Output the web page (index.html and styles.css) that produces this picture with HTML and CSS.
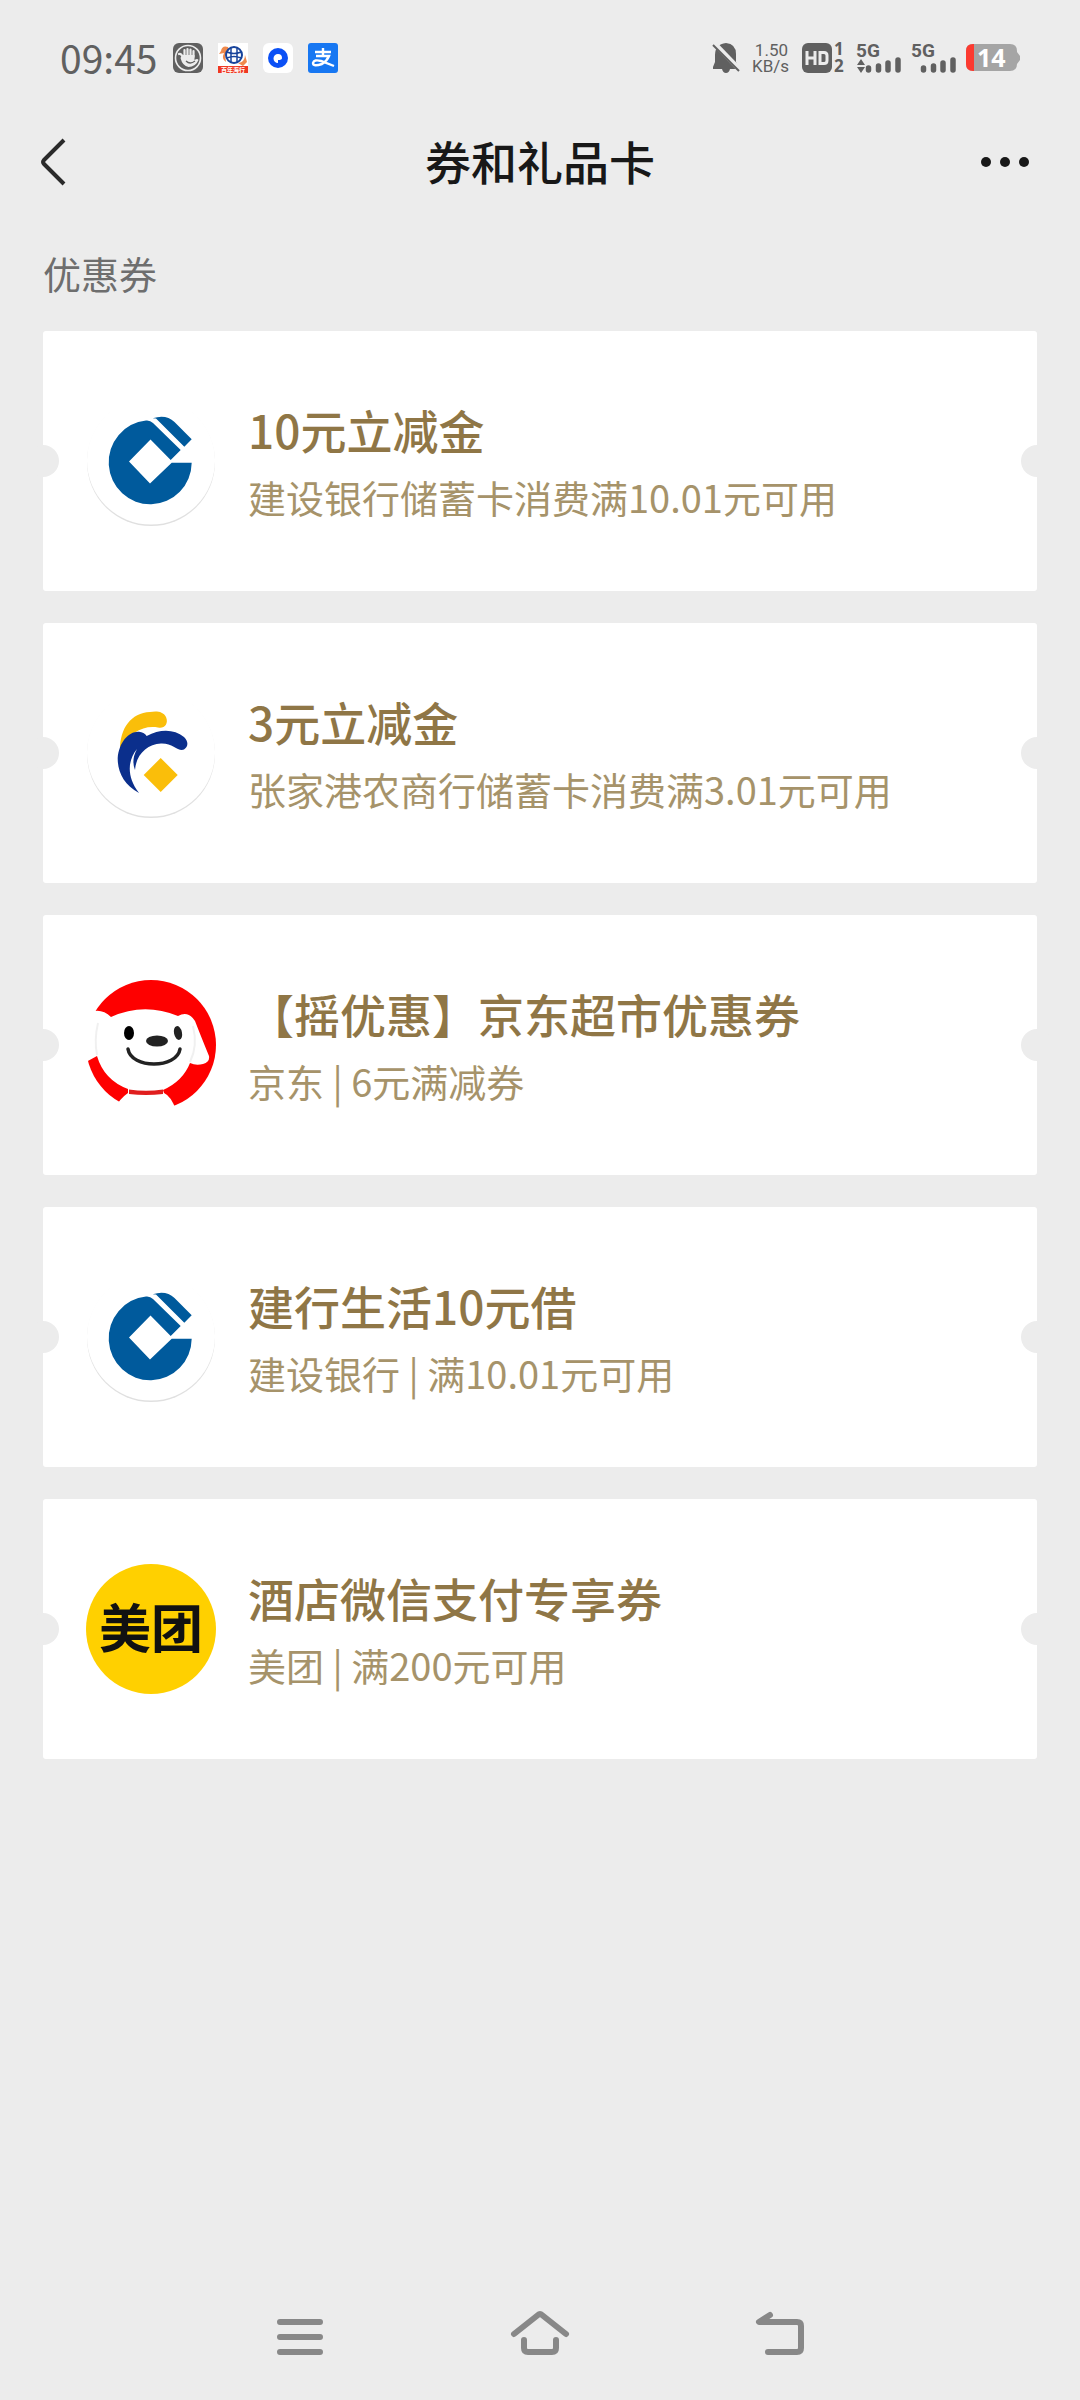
FILE: index.html
```html
<!DOCTYPE html>
<html lang="zh-CN">
<head>
    <meta charset="UTF-8">
    <meta name="viewport" content="width=device-width, initial-scale=1.0">
    <title>券和礼品卡</title>
    <link rel="stylesheet" href="styles.css">
</head>
<body>
    <!-- Shared logo, used by two coupons -->
    <svg class="defs" width="0" height="0" aria-hidden="true">
        <symbol id="ccb" viewBox="0 0 130 130">
            <circle cx="65" cy="66" r="64" fill="#e0e0e0"/>
            <circle cx="65" cy="64.5" r="64" fill="#fff"/>
            <path fill="#005a9c" d="M60 24.5Q64 24 67 27L94.7 54L84.7 64L64.5 43.5L43 65.5L64 87.5L85.7 66.7H105.7A41.5 42 0 1 1 60 24.5Z"/>
            <path fill="#005a9c" d="M66.7 22.3Q80 18 88.5 26L105.7 43.3L98.3 50.7L70 22.5Z"/>
        </symbol>
    </svg>

    <div class="status-bar">
        <span class="time">09:45</span>
        <div class="status-apps">
            <svg width="30" height="30" viewBox="0 0 30 30">
                <rect width="30" height="30" rx="6" fill="#606060"/>
                <circle cx="15" cy="15" r="12.5" fill="none" stroke="#ececec" stroke-width="1.6"/>
                <path d="M6 11Q8 10 10 14M11.500 14V7M14.500 13V6M17.500 13V6.500M20.500 14V8" fill="none" stroke="#ececec" stroke-width="2.2" stroke-linecap="round"/>
                <path d="M9 12h12.500v5q3-2 4 0-3 7-10 7-6-1-8-9Z" fill="#ececec"/>
                <path d="M13 18q4 4 9 0" fill="none" stroke="#606060" stroke-width="1.2"/>
            </svg>
            <svg width="30" height="30" viewBox="0 0 30 30">
                <rect width="30" height="30" fill="#fff"/>
                <path d="M10 4Q4 2 3 8l-2 3 5-1q-3 6 2 9l-1-7 4-5ZM20 20q7-1 7-8l2 7-4 4Z" fill="#ef8a4d"/>
                <circle cx="16" cy="12" r="8" fill="none" stroke="#17439b" stroke-width="2"/>
                <path d="M13 5v14M19 5v14M9 9q7 3 14 0M9 15q7-3 14 0" fill="none" stroke="#17439b" stroke-width="1.5"/>
                <rect y="23" width="30" height="7" fill="#f03822"/>
                <text x="15" y="29" class="tiny-label">百年海行</text>
            </svg>
            <svg width="30" height="30" viewBox="0 0 30 30">
                <rect width="30" height="30" rx="6" fill="#fff"/>
                <circle cx="15" cy="15" r="10" fill="#0b50f5"/>
                <path d="M15 11a4 4 0 1 0 0 9v-3q4 0 4-2a4 4 0 0 0-4-4Z" fill="#fff"/>
            </svg>
            <svg width="30" height="30" viewBox="0 0 30 30">
                <rect width="30" height="30" rx="3" fill="#1777f2"/>
                <path d="M7 9h16M15 5v8M8 13h13q-2 5-7 8-9 3-9-1 1-4 8-2l13 5" fill="none" stroke="#fff" stroke-width="2.4"/>
            </svg>
        </div>

        <div class="status-icons">
            <svg width="28" height="30" viewBox="0 0 28 30">
                <path d="M14 0Q3 1 3 12v7l-2 5v2h9q1 4 4 4t4-4h8v-3l-2-4v-8Q24 1 14 0Z" fill="#606060"/>
                <path d="M2 0L28 27" stroke="#ececec" stroke-width="5"/>
                <path d="M1 2L27 28" stroke="#606060" stroke-width="2"/>
            </svg>
            <div class="speed"><span>1.50</span><span>KB/s</span></div>
            <svg class="hd" width="44" height="30" viewBox="0 0 44 30">
                <rect width="30" height="30" rx="6" fill="#606060"/>
                <path d="M5 8v14M13 8v14M5 15h8M18 9.5h4q3 0 3 3v5q0 3-3 3h-4Z" fill="none" stroke="#ececec" stroke-width="3"/>
                <text x="32" y="12" class="sim">1</text>
                <text x="32" y="29" class="sim">2</text>
            </svg>
            <svg class="signal" width="45" height="30" viewBox="0 0 45 30">
                <text x="0" y="14" class="net">5G</text>
                <path d="M1 22l4-6 4 6ZM1 24l4 6 4-6Z" fill="#606060"/>
                <path d="M12.500 25v2M22.500 23v4M32 20v7M42 17v10" stroke="#606060" stroke-width="5.500" stroke-linecap="round"/>
            </svg>
            <svg class="signal" width="45" height="30" viewBox="0 0 45 30">
                <text x="0" y="14" class="net">5G</text>
                <path d="M12.500 25v2M22.500 23v4M32 20v7M42 17v10" stroke="#606060" stroke-width="5.500" stroke-linecap="round"/>
            </svg>
            <svg width="54" height="28" viewBox="0 0 54 28">
                <path d="M7 0h37q7 0 7 7v1l3 4v4l-3 4q0 7-7 7H7Q0 27 0 20V7Q0 0 7 0Z" fill="#a5a5a5"/>
                <path d="M8 0H7Q0 0 0 7v13q0 7 7 7h1Z" fill="#fc3a30"/>
                <text x="11" y="23" class="battery-level">14</text>
            </svg>
        </div>
    </div>

    <header class="header">
        <button class="icon-btn" type="button" aria-label="返回">
            <svg width="26" height="48" viewBox="0 0 26 48">
                <path d="M24 2L4 22q-2 2 0 4l20 20" fill="none" stroke="#2a2a2a" stroke-width="4"/>
            </svg>
        </button>
        <h1>券和礼品卡</h1>
        <button class="icon-btn" type="button" aria-label="更多">
            <svg width="50" height="12" viewBox="0 0 50 12">
                <g fill="#181818">
                    <circle cx="6" cy="6" r="5"/>
                    <circle cx="25" cy="6" r="5"/>
                    <circle cx="44" cy="6" r="5"/>
                </g>
            </svg>
        </button>
    </header>

    <main class="content">
        <h2>优惠券</h2>
        <ul class="coupons">
            <li class="coupon">
                <svg class="logo" viewBox="0 0 130 130"><use href="#ccb"/></svg>
                <div class="info">
                    <h3>10元立减金</h3>
                    <p>建设银行储蓄卡消费满10.01元可用</p>
                </div>
            </li>
            <li class="coupon">
                <svg class="logo" viewBox="0 0 130 130">
                    <circle cx="65" cy="66" r="64" fill="#e0e0e0"/>
                    <circle cx="65" cy="64.5" r="64" fill="#fff"/>
                    <path d="M34 62C34 40 45 25 64 24C70 23 77 23 80 29C83 36 78 41 72 39.500C58 37 43 44 34 62Z" fill="#fabe0a"/>
                    <path d="M53 105C38 97 31.500 84 31.700 70C33 54 43 43 53 43.700Q58 44 60.700 48C74 41 88 41 98 49C103 54 102 59 98 61.500C92 64 87 55 75 55.500C61 56 50 67 49 82Q45 72 51 61C42 72 40 88 53 105Z" fill="#0b2f8c"/>
                    <path d="M74.700 70L91.700 87L74.700 104L57.700 87Z" fill="#fabe0a"/>
                </svg>
                <div class="info">
                    <h3>3元立减金</h3>
                    <p>张家港农商行储蓄卡消费满3.01元可用</p>
                </div>
            </li>
            <li class="coupon">
                <svg class="logo" viewBox="0 0 130 130">
                    <circle cx="65" cy="65" r="65" fill="#fe0000"/>
                    <path d="M0 34Q14 26 25 37Q58 22 92 36Q102 30 109 41Q114 54 123 76Q124 82 117 84Q110 86 104 83Q97 101 77 110L78 113Q85 116 90 130H28Q33 119 42 113V109Q18 100 11 76L0 82Z" fill="#fff"/>
                    <path d="M107 46Q112 66 104 82M12 43Q8 60 11 75" fill="none" stroke="#f0f0f0" stroke-width="2"/>
                    <path d="M43 109.500Q60 112 77 109.500V114Q60 116 43 114Z" fill="#e01e1e"/>
                    <ellipse cx="43" cy="53" rx="5" ry="7" fill="#000"/>
                    <ellipse cx="92" cy="53" rx="4" ry="7" fill="#222" transform="rotate(-12 92 53)"/>
                    <ellipse cx="71" cy="61" rx="11" ry="5.500" fill="#222"/>
                    <path d="M42 69C45 89 91 89 94 69" fill="none" stroke="#222" stroke-width="3.500" stroke-linecap="round"/>
                </svg>
                <div class="info">
                    <h3>【摇优惠】京东超市优惠券</h3>
                    <p>京东 | 6元满减券</p>
                </div>
            </li>
            <li class="coupon">
                <svg class="logo" viewBox="0 0 130 130"><use href="#ccb"/></svg>
                <div class="info">
                    <h3>建行生活10元借</h3>
                    <p>建设银行 | 满10.01元可用</p>
                </div>
            </li>
            <li class="coupon">
                <svg class="logo" viewBox="0 0 130 130">
                    <circle cx="65" cy="65" r="65" fill="#ffd000"/>
                    <text x="65" y="84" class="meituan">美团</text>
                </svg>
                <div class="info">
                    <h3>酒店微信支付专享券</h3>
                    <p>美团 | 满200元可用</p>
                </div>
            </li>
        </ul>
    </main>

    <!-- System navigation -->
    <nav class="bottom-nav">
        <button class="icon-btn" type="button" aria-label="最近任务">
            <svg width="60" height="60" viewBox="0 0 60 60">
                <path d="M10 16h40M10 31h40M10 46h40"/>
            </svg>
        </button>
        <button class="icon-btn" type="button" aria-label="主页">
            <svg width="60" height="60" viewBox="0 0 60 60">
                <path d="M4 28L28 9q2-2 4 0l24 19M14 34v8q0 4 4 4h24q4 0 4-4v-8"/>
            </svg>
        </button>
        <button class="icon-btn" type="button" aria-label="返回上一级">
            <svg width="60" height="60" viewBox="0 0 60 60">
                <path d="M20 9L9 16H47q4 0 4 4v22q0 4-4 4H18"/>
            </svg>
        </button>
    </nav>
</body>
</html>
```
FILE: styles.css
```css
* {
    box-sizing: border-box;
}

body {
    margin: 0;
    min-height: 100vh;
    display: flex;
    flex-direction: column;
    background-color: #ececec;
    font-family: "Noto Sans CJK SC", sans-serif;
}

h1, h2, h3, p, ul {
    margin: 0;
    padding: 0;
}

svg {
    display: block;
    flex-shrink: 0;
}

.defs {
    position: absolute;
}

.icon-btn {
    padding: 0;
    border: none;
    background: none;
    cursor: pointer;
}

/* Status bar */
.status-bar {
    display: flex;
    align-items: center;
    height: 116px;
    padding: 0 60px;
    color: #606060;
}

.status-bar svg {
    overflow: visible;
}

.time {
    padding-bottom: 2px;
    font-size: 39px;
    line-height: 40px;
}

.status-apps {
    display: flex;
    gap: 15px;
    margin-left: 16px;
}

.status-icons {
    display: flex;
    align-items: center;
    margin-left: auto;
}

.speed {
    display: flex;
    flex-direction: column;
    width: 36px;
    margin: 0 14px 0 12px;
    font-family: Roboto, sans-serif;
    font-size: 17px;
    line-height: 16px;
    text-align: right;
}

.hd, .signal {
    margin-right: 10px;
}

.tiny-label {
    font-size: 6px;
    font-weight: 700;
    fill: #fff;
    text-anchor: middle;
}

.sim {
    font-family: "Noto Sans", sans-serif;
    font-size: 17px;
    font-weight: 700;
    fill: #606060;
}

.net {
    font-family: Roboto, sans-serif;
    font-size: 19px;
    font-weight: 700;
    fill: #606060;
}

.battery-level {
    font-family: "Noto Sans", sans-serif;
    font-size: 25px;
    font-weight: 700;
    fill: #fff;
}

/* Page header */
.header {
    display: flex;
    align-items: center;
    justify-content: space-between;
    height: 92px;
    padding: 0 40px;
}

.header .icon-btn {
    display: flex;
    width: 60px;
}

.header h1 {
    padding-bottom: 4px;
    font-size: 46px;
    font-weight: 500;
    line-height: 64px;
    color: #181818;
}

/* Coupons */
.content {
    padding: 37px 43px;
}

.content h2 {
    margin-bottom: 30px;
    font-size: 38px;
    font-weight: 400;
    line-height: 56px;
    color: #6e6e6e;
}

.coupons {
    display: flex;
    flex-direction: column;
    gap: 32px;
    list-style: none;
}

.coupon {
    position: relative;
    display: flex;
    align-items: center;
    gap: 32px;
    padding: 60px 43px;
    border-radius: 3px;
    background-color: #fff;
}

/* Ticket notches on both edges */
.coupon::before,
.coupon::after {
    content: "";
    position: absolute;
    top: 50%;
    width: 32px;
    height: 32px;
    margin-top: -16px;
    border-radius: 50%;
    background-color: #ececec;
}

.coupon::before {
    left: -16px;
}

.coupon::after {
    right: -16px;
}

.logo {
    width: 130px;
    height: 130px;
}

.meituan {
    font-size: 52px;
    font-weight: 700;
    fill: #111;
    text-anchor: middle;
}

.info {
    padding-top: 4px;
}

.info h3 {
    font-size: 46px;
    font-weight: 500;
    line-height: 68px;
    color: #8f7646;
}

.info p {
    font-size: 38px;
    line-height: 68px;
    color: #a6936a;
}

/* Bottom navigation */
.bottom-nav {
    display: flex;
    align-items: center;
    justify-content: center;
    gap: 180px;
    height: 128px;
    margin-top: auto;
}

.bottom-nav path {
    fill: none;
    stroke: #888;
    stroke-width: 6;
    stroke-linecap: round;
    stroke-linejoin: round;
}
```
